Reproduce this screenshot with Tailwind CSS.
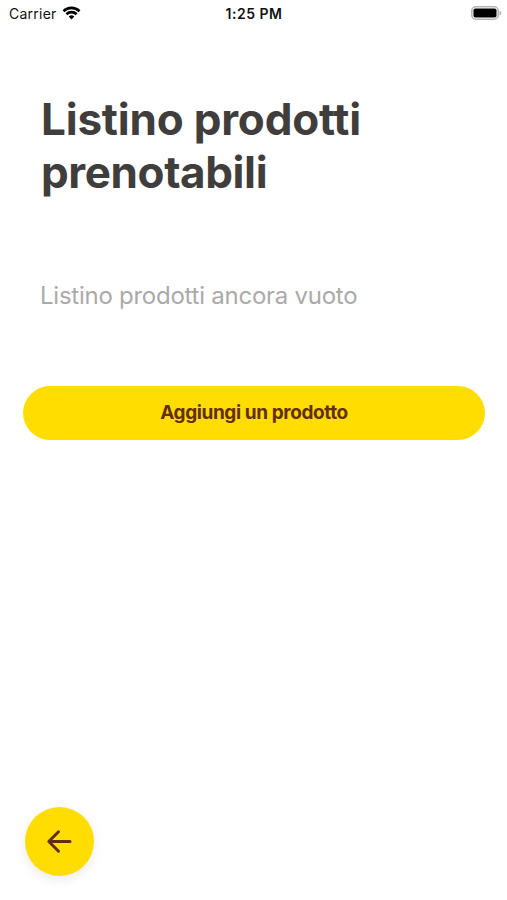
<!DOCTYPE html>
<html lang="it"><head><meta charset="utf-8"><title>Listino prodotti</title><script src="https://cdn.jsdelivr.net/npm/@tailwindcss/browser@4"></script></head>
<body class="bg-white font-['Inter',sans-serif]">
<div class="flex h-[900px] w-[507px] flex-col overflow-hidden">
<header class="grid h-[27px] grid-cols-[169px_169px_1fr] items-center pl-[9px] pr-[5px] text-[14px] text-[#111]">
<div class="flex items-center gap-[5px]"><span class="whitespace-nowrap tracking-[0.25px]">Carrier</span>
<svg class="-mt-[2px] h-[14px] w-[19px]" viewBox="0 0 18 14" fill="none" stroke="#000" stroke-width="2.6"><path d="M1 5.2a11.4 11.4 0 0 1 16 0M3.900 8.2a7.300 7.300 0 0 1 10.200 0"/><path d="M9 13.500 6.200 10.600a4 4 0 0 1 5.600 0Z" fill="#000" stroke="none"/></svg></div>
<div class="-ml-[17px] text-center text-[14px] font-semibold tracking-[0.5px] whitespace-nowrap">1:25 PM</div>
<div class="-mt-[2px] flex justify-end"><svg class="h-[14px] w-[31px]" viewBox="0 0 31 14"><rect x=".8" y=".8" width="26.400" height="12.400" rx="4" fill="none" stroke="#b5b5b5" stroke-width="1.600"/><rect x="2.500" y="2.500" width="23" height="9" rx="1.800"/><path d="M28.500 4.500c2.500.8 2.500 4.200 0 5Z" fill="#b5b5b5"/></svg></div>
</header>
<main class="flex flex-1 flex-col px-[23px]">
<h1 class="mt-[66px] pl-[18px] text-[44px] leading-[53px] font-bold text-[#3f3e3c]"><span class="block tracking-[-0.2px] whitespace-nowrap">Listino prodotti</span><span class="block tracking-[-0.4px] whitespace-nowrap">prenotabili</span></h1>
<p class="mt-[82px] pl-[17px] text-[24px] leading-[30px] tracking-[-0.25px] whitespace-nowrap text-[#aaa]">Listino prodotti ancora vuoto</p>
<button class="mt-[75px] h-[54px] w-[462px] rounded-full bg-[#ffdd00] pt-px text-[19px] font-bold tracking-[-0.4px] text-[#652e0b]">Aggiungi un prodotto</button>
</main>
<footer class="pb-[24px] pl-[25px]"><button class="flex h-[69px] w-[69px] items-center justify-center rounded-full bg-[#ffdd00] shadow-[0_4px_12px_#00000014]"><svg class="mr-px h-[26px] w-[26px]" viewBox="0 0 26 26" fill="none" stroke="#652e0b" stroke-width="3" stroke-linecap="round" stroke-linejoin="round"><path d="M24 12.500H3M12.500 2.800 2.800 12.500l9.700 9.700"/></svg></button></footer>
</div></body></html>
